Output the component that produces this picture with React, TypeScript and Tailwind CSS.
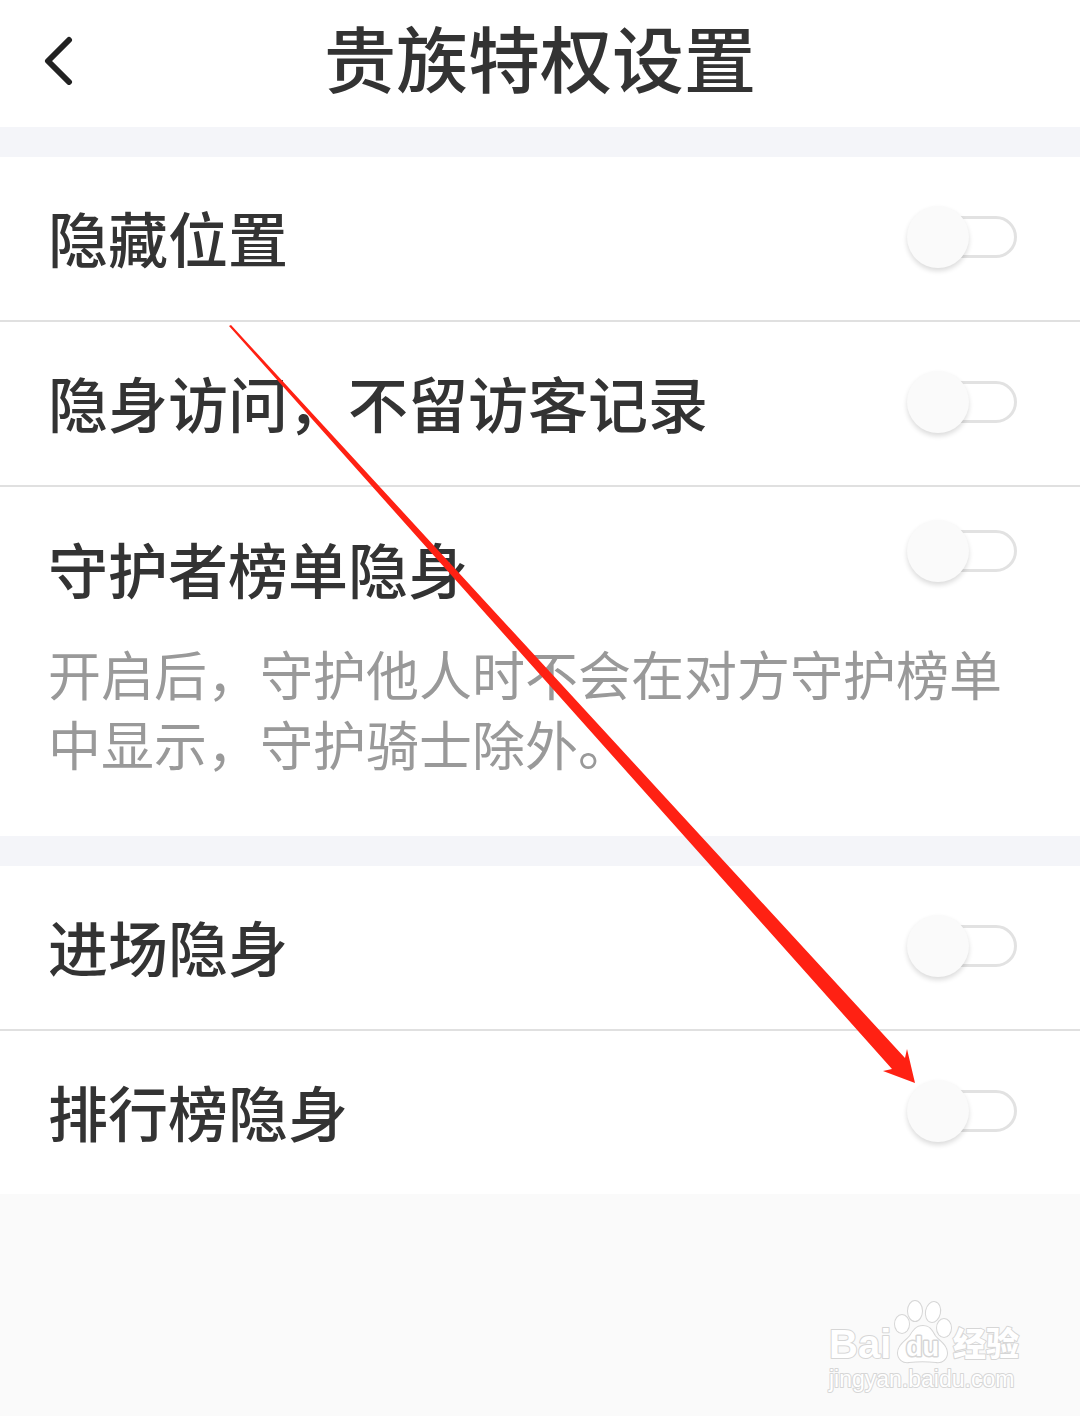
import { useState } from "react";

type Setting = {
  id: string;
  label: string;
  description?: string;
};

const groups: Setting[][] = [
  [
    { id: "hide-location", label: "隐藏位置" },
    { id: "stealth-visit", label: "隐身访问，不留访客记录" },
    {
      id: "guardian-rank",
      label: "守护者榜单隐身",
      description: "开启后，守护他人时不会在对方守护榜单中显示，守护骑士除外。",
    },
  ],
  [
    { id: "stealth-entry", label: "进场隐身" },
    { id: "stealth-rank", label: "排行榜隐身" },
  ],
];

function Toggle({ id }: { id: string }) {
  const [on, setOn] = useState(false);
  return (
    <input
      id={id}
      type="checkbox"
      role="switch"
      checked={on}
      onChange={(e) => setOn(e.target.checked)}
      className="relative h-[42px] w-[100px] shrink-0 cursor-pointer appearance-none rounded-full border-[3px] border-[#e2e2e2] bg-white before:absolute before:-top-[13px] before:-left-[13px] before:size-[62px] before:rounded-full before:bg-[#fafafa] before:shadow-[0_3px_5px_rgba(0,0,0,0.14)] before:transition-transform checked:border-red-300 checked:before:translate-x-[58px]"
    />
  );
}

function SettingRow({ setting }: { setting: Setting }) {
  const { id, label, description } = setting;
  return (
    <li className="px-12">
      <div
        className={
          description
            ? "flex items-start justify-between pt-[43px]"
            : "flex h-[163px] items-center justify-between pb-1"
        }
      >
        <label htmlFor={id} className="text-[60px] leading-[76px] font-medium">
          {label}
        </label>
        <div className="flex pr-[15px]">
          <Toggle id={id} />
        </div>
      </div>
      {description && (
        <p className="pt-8 pb-[58px] text-[53px] leading-[70px] text-[#999]">{description}</p>
      )}
    </li>
  );
}

function Arrow() {
  return (
    <svg
      className="pointer-events-none absolute top-[325px] left-[229px]"
      width="690"
      height="760"
      viewBox="229 325 690 760"
      aria-hidden="true"
    >
      <polygon
        points="229,326 231,325 905,1058 907,1049 915,1083 883,1071 892,1069"
        fill="#ff2113"
      />
    </svg>
  );
}

function Watermark() {
  return (
    <svg width="210" height="105" viewBox="0 0 210 105" role="img" aria-label="Baidu">
      <g fill="#fff" stroke="#d6d6d6" strokeWidth="2" strokeLinejoin="round" paintOrder="stroke">
        <text x="9" y="63" fontSize="40" fontWeight="700" fontFamily="Liberation Sans, sans-serif">
          Bai
        </text>
        <ellipse cx="82" cy="29" rx="7" ry="9" />
        <ellipse cx="95" cy="16" rx="7" ry="10" />
        <ellipse cx="113" cy="17" rx="7" ry="10" transform="rotate(12 113 17)" />
        <ellipse cx="124" cy="33" rx="7" ry="9" />
        <path d="M103 31c-7 0-10 5-13 10-4 5-12 9-12 17 0 6 5 10 11 9 9-1 18-1 27 0 6 1 11-3 11-9 0-8-8-12-12-17-3-5-5-10-12-10z" />
        <text
          x="86"
          y="61"
          fontSize="27"
          fontWeight="700"
          strokeWidth="3"
          fontFamily="Liberation Sans, sans-serif"
        >
          du
        </text>
        <text
          x="133"
          y="61"
          fontSize="33"
          fontWeight="900"
          fontFamily="Noto Sans CJK SC, sans-serif"
        >
          经验
        </text>
        <text x="9" y="92" fontSize="23" fontFamily="Liberation Sans, sans-serif">
          jingyan.baidu.com
        </text>
      </g>
    </svg>
  );
}

export default function App() {
  return (
    <div className="relative flex min-h-screen flex-col overflow-hidden bg-[#fafafa] font-['Noto_Sans_CJK_SC',sans-serif] text-[#333]">
      {/* Header */}
      <header className="grid h-[127px] grid-cols-[96px_1fr_96px] items-center bg-white pb-2">
        <button type="button" aria-label="返回" className="flex justify-center pl-5">
          <svg width="30" height="50" viewBox="0 0 30 50" fill="none">
            <path
              d="M26 5L5 26L26 47"
              stroke="#222"
              strokeWidth="6"
              strokeLinecap="round"
              strokeLinejoin="round"
            />
          </svg>
        </button>
        <h1 className="pb-2 text-center text-[72px] leading-[100px] font-medium">贵族特权设置</h1>
      </header>

      {/* Settings */}
      <main>
        {groups.map((group, i) => (
          <section key={i} className="border-t-[30px] border-[#f4f5f9] bg-white">
            <ul className="divide-y-2 divide-[#e0e0e0]">
              {group.map((setting) => (
                <SettingRow key={setting.id} setting={setting} />
              ))}
            </ul>
          </section>
        ))}
      </main>

      <footer className="flex flex-1 items-end justify-end pr-[50px] pb-4">
        <Watermark />
      </footer>

      <Arrow />
    </div>
  );
}
